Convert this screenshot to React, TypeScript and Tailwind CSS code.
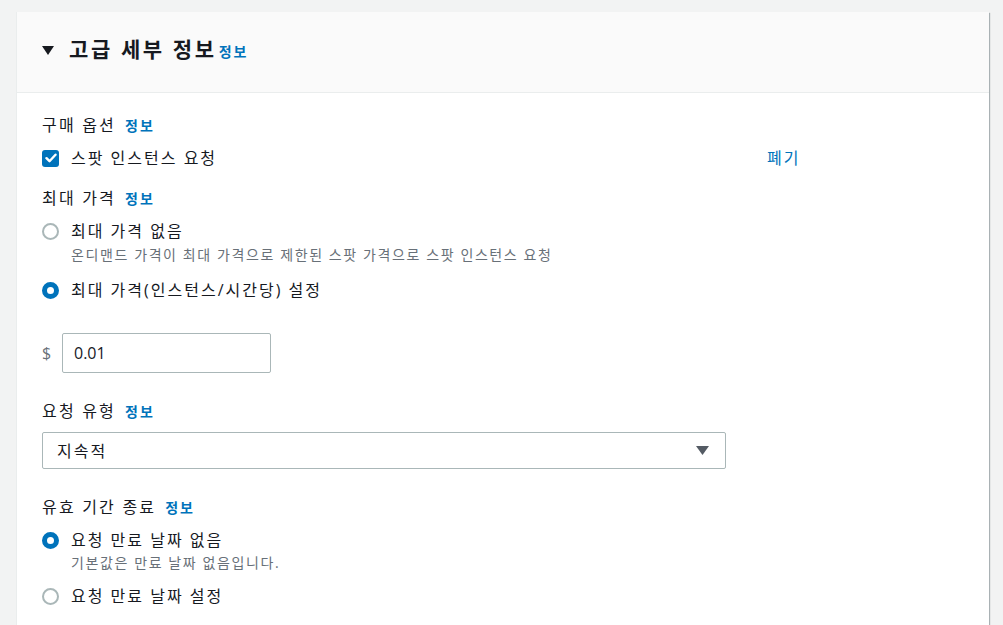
import React from 'react';

const font = { fontFamily: '"Open Sans", "Noto Sans CJK KR", sans-serif' };

const Info = ({ className = '' }: { className?: string }) => (
  <a className={`text-[14px] font-semibold text-[#0073bb] tracking-[2px] ${className}`}>정보</a>
);

const Label = ({ text, className = '' }: { text: string; className?: string }) => (
  <div className={`flex items-center h-[20px] text-[16px] text-[#16191f] ${className}`}>
    <span className="tracking-[2.2px]">{text}</span>
    <Info className="ml-[9px]" />
  </div>
);

const Radio = ({ checked, label, className = '' }: { checked: boolean; label: string; className?: string }) => (
  <div className={`flex items-center h-[24px] ${className}`}>
    <span
      className={`w-[17px] h-[17px] rounded-full bg-white ${
        checked ? 'border-[5px] border-[#0073bb]' : 'border-2 border-[#aab7b8]'
      }`}
    />
    <span className="ml-[12px] text-[16px] text-[#16191f] tracking-[2px]">{label}</span>
  </div>
);

const Desc = ({ text, className = '' }: { text: string; className?: string }) => (
  <div className={`h-[18px] leading-[18px] pl-[29px] text-[14px] tracking-[1.6px] text-[#687078] ${className}`}>{text}</div>
);

export default function App() {
  return (
    <div className="w-[1003px] h-[625px] bg-[#f2f3f3] overflow-hidden pt-[12px] pl-[16px]" style={font}>
      <div className="w-[973px] h-[640px] bg-white border-l border-[#eaeded] shadow-[1px_1px_1px_0_rgba(0,28,36,0.3)]">
        <div className="h-[81px] bg-[#fafafa] border-b border-[#eaeded] flex items-center pl-[25px] pb-[4px]">
          <svg width="12" height="9" viewBox="0 0 12 9" className="mt-[1px]">
            <path d="M0 0h12L6 9z" fill="#16191f" />
          </svg>
          <div className="ml-[15px] flex items-baseline">
            <span className="text-[21px] font-bold text-[#16191f] tracking-[2.6px]">고급 세부 정보</span>
            <Info className="ml-[2px]" />
          </div>
        </div>
        <div className="pl-[25px] pt-[22px]">
          <Label text="구매 옵션" />
          <div className="flex items-center h-[24px] mt-[11px]">
            <div className="w-[725px] flex items-center">
              <span className="w-[17px] h-[17px] rounded-[3px] bg-[#0073bb] flex items-center justify-center">
                <svg width="12" height="10" viewBox="0 0 12 10">
                  <path d="M1.5 5.2l3 3 6-6.5" fill="none" stroke="white" strokeWidth="2.4" strokeLinecap="round" strokeLinejoin="round" />
                </svg>
              </span>
              <span className="ml-[12px] text-[16px] text-[#16191f] tracking-[2px]">스팟 인스턴스 요청</span>
            </div>
            <a className="text-[16px] text-[#0073bb] tracking-[2px]">폐기</a>
          </div>

          <Label text="최대 가격" className="mt-[18px]" />
          <Radio checked={false} label="최대 가격 없음" className="mt-[11px]" />
          <Desc text="온디맨드 가격이 최대 가격으로 제한된 스팟 가격으로 스팟 인스턴스 요청" className="mt-[3px]" />
          <Radio checked label="최대 가격(인스턴스/시간당) 설정" className="mt-[14px]" />

          <div className="flex items-center mt-[31px]">
            <span className="text-[16px] text-[#687078] w-[20px]">$</span>
            <div className="w-[209px] h-[40px] border border-[#aab7b8] rounded-[2px] flex items-center pl-[11px] text-[16px] text-[#16191f]">
              0.01
            </div>
          </div>

          <Label text="요청 유형" className="mt-[28px]" />
          <div className="mt-[11px] w-[684px] h-[37px] border border-[#aab7b8] rounded-[2px] flex items-center justify-between pl-[14px] pr-[16px]">
            <span className="text-[16px] text-[#16191f] tracking-[2px]">지속적</span>
            <svg width="13" height="9" viewBox="0 0 13 9">
              <path d="M0 0h13L6.5 9z" fill="#545b64" />
            </svg>
          </div>

          <Label text="유효 기간 종료" className="mt-[28px]" />
          <Radio checked label="요청 만료 날짜 없음" className="mt-[11px]" />
          <Desc text="기본값은 만료 날짜 없음입니다." className="mt-[2px]" />
          <Radio checked={false} label="요청 만료 날짜 설정" className="mt-[12px]" />
        </div>
      </div>
    </div>
  );
}
